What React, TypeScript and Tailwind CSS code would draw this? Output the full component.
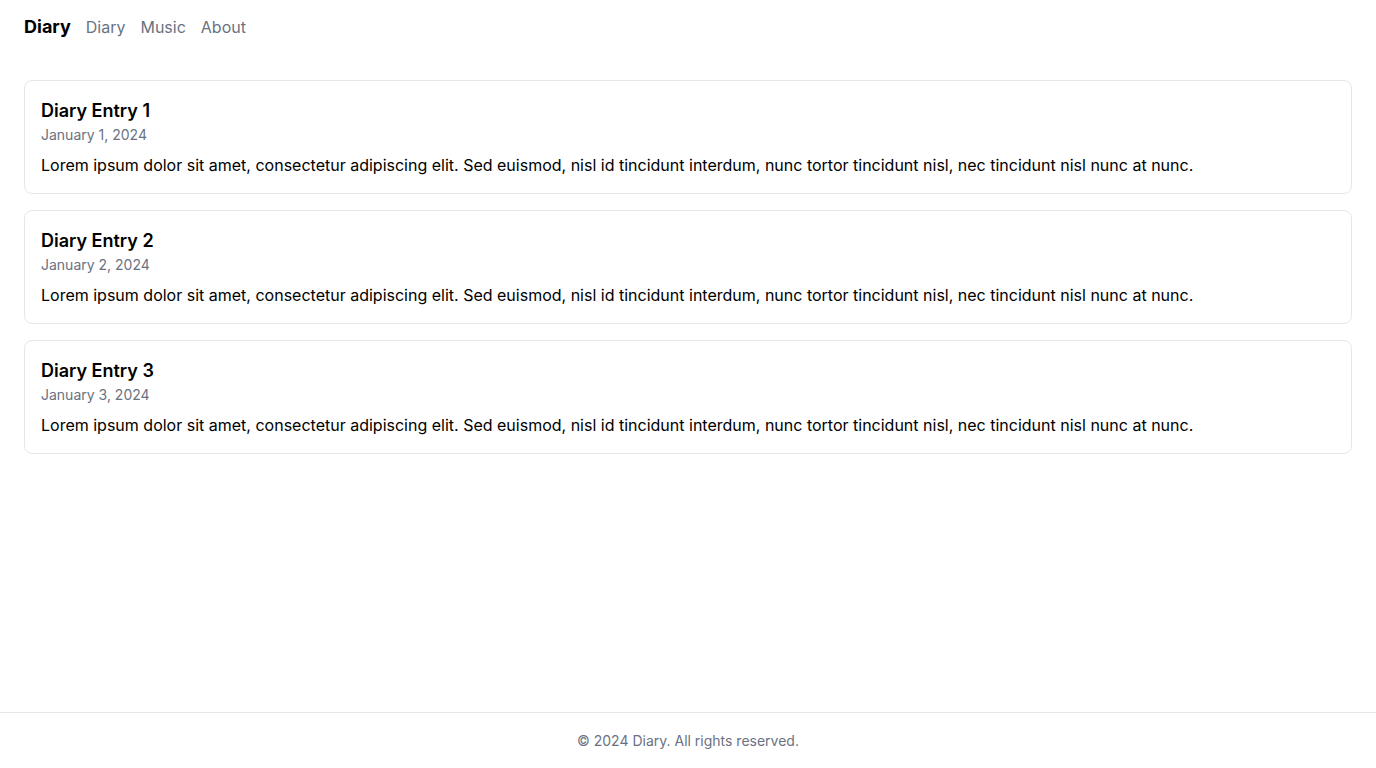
import React from 'react';

const entries = [
  { id: 1, title: 'Diary Entry 1', date: 'January 1, 2024' },
  { id: 2, title: 'Diary Entry 2', date: 'January 2, 2024' },
  { id: 3, title: 'Diary Entry 3', date: 'January 3, 2024' },
];

const body =
  'Lorem ipsum dolor sit amet, consectetur adipiscing elit. Sed euismod, nisl id tincidunt interdum, nunc tortor tincidunt nisl, nec tincidunt nisl nunc at nunc.';

export default function App() {
  return (
    <div className="min-h-screen flex flex-col bg-white text-black font-['Inter',sans-serif]">
      {/* Header */}
      <header className="h-[54px] px-6 flex items-center gap-4">
        <span className="text-lg font-bold mr-[-1px]">Diary</span>
        <nav className="flex items-center gap-[15px]">
          <a href="#" className="text-base text-gray-500">Diary</a>
          <a href="#" className="text-base text-gray-500">Music</a>
          <a href="#" className="text-base text-gray-500">About</a>
        </nav>
      </header>

      {/* Entries */}
      <main className="flex-1 px-6 pt-[26px] pb-6 flex flex-col gap-4">
        {entries.map((e) => (
          <div key={e.id} className="border border-gray-200 rounded-lg p-4">
            <h2 className="text-lg font-semibold">{e.title}</h2>
            <p className="text-sm text-gray-500">{e.date}</p>
            <p className="mt-2 text-base">{body}</p>
          </div>
        ))}
      </main>

      {/* Footer */}
      <footer className="h-14 border-t border-gray-200 flex items-center justify-center text-sm text-gray-500">
        © 2024 Diary. All rights reserved.
      </footer>
    </div>
  );
}
